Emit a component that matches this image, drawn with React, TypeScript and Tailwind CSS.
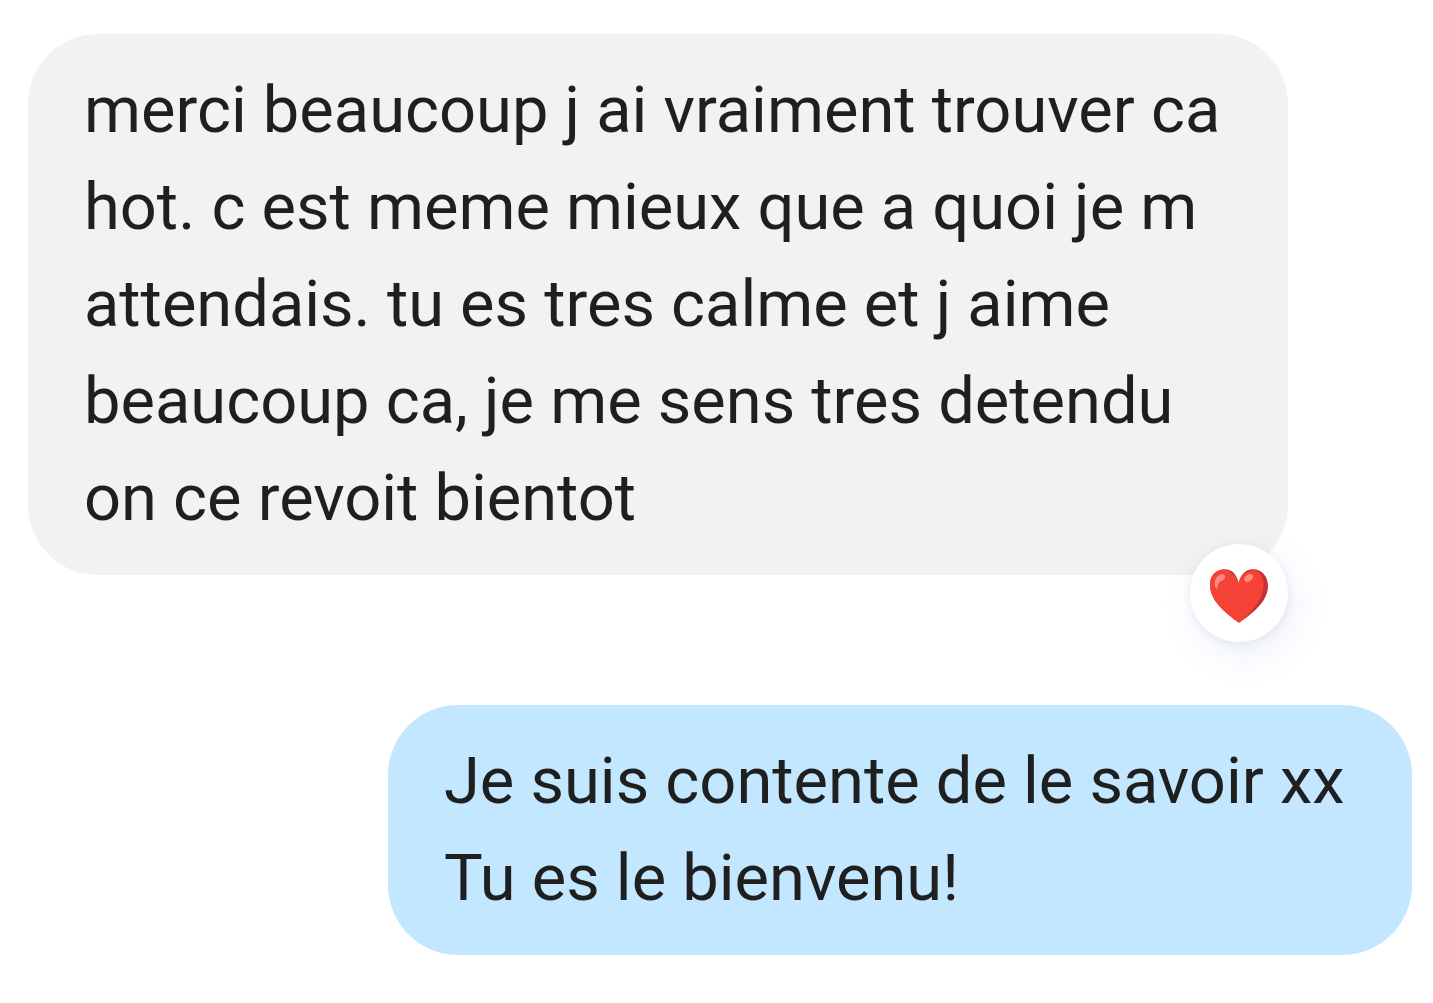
type Message = {
  id: number;
  from: 'them' | 'me';
  text: string;
  reaction?: string;
};

const MESSAGES: Message[] = [
  {
    id: 1,
    from: 'them',
    text: 'merci beaucoup j ai vraiment trouver ca hot. c est meme mieux que a quoi je m attendais. tu es tres calme et j aime beaucoup ca, je me sens tres detendu on ce revoit bientot',
    reaction: 'heart',
  },
  {
    id: 2,
    from: 'me',
    text: 'Je suis contente de le savoir xx\nTu es le bienvenu!',
  },
];

function Heart() {
  return (
    <svg viewBox="0 0 174 161" className="w-[58px]" aria-hidden="true">
      <path
        d="M86 42C92 17 106 1 128 1C156 1 174 22 174 51C174 94 134 130 87 161C42 130 0 92 0 48C0 20 17 1 44 1C66 1 80 16 86 42Z"
        fill="#c62f35"
      />
      <path
        d="M86 42C79 20 63 4 41 2C16 3 0 20 0 48C0 92 42 130 87 161C132 124 161 88 161 46C161 24 150 9 132 4C109 3 92 18 86 42Z"
        fill="#f44336"
      />
      <path
        d="M21 60C13 54 12 40 17 30C22 20 31 15 38 16C46 17 47 25 42 31C37 36 31 36 27 41C22 47 24 56 21 60Z"
        fill="#ff8a80"
      />
      <ellipse cx="116" cy="27" rx="15" ry="10" transform="rotate(-38 116 27)" fill="#ff8a80" />
    </svg>
  );
}

function Bubble({ message }: { message: Message }) {
  const mine = message.from === 'me';

  return (
    <li
      className={
        mine
          ? 'relative w-full max-w-[1024px] self-end rounded-[70px] bg-[#c2e7ff] py-7 pr-10 pl-14'
          : 'relative w-full max-w-[1260px] self-start rounded-[70px] bg-[#f2f2f2] py-7 pr-10 pl-14'
      }
    >
      <p className="text-[65px] leading-[97px] whitespace-pre-line text-[#1f1f1f]">{message.text}</p>

      {/* reaction badge hangs off the bottom corner */}
      {message.reaction && (
        <button
          type="button"
          aria-label={message.reaction}
          className="absolute right-0 -bottom-[67px] flex size-[98px] items-center justify-center rounded-full bg-white pt-1.5 shadow-[6px_12px_36px_rgba(90,125,210,0.12),0_2px_8px_rgba(60,64,90,0.08)]"
        >
          <Heart />
        </button>
      )}
    </li>
  );
}

export default function App() {
  return (
    <main className="min-h-screen bg-white pt-[34px] pr-[21px] pb-12 pl-7 font-['Roboto',sans-serif]">
      <ul className="flex flex-col gap-[130px]">
        {MESSAGES.map((m) => (
          <Bubble key={m.id} message={m} />
        ))}
      </ul>
    </main>
  );
}
